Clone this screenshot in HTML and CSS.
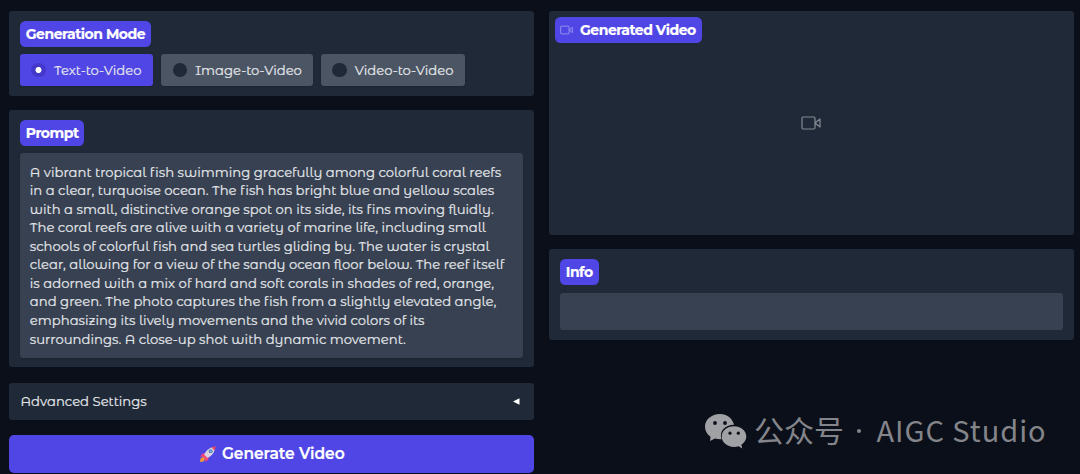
FILE: index.html
```
<!DOCTYPE html>
<html lang="en">
<head>
  <meta charset="UTF-8" />
  <meta name="viewport" content="width=device-width, initial-scale=1" />
  <title>Video Generation</title>
  <link rel="stylesheet" href="styles.css">
</head>
<body>
  <main class="container">
    <div class="column">
      <section class="panel mode-panel">
        <span class="label label-mode">Generation Mode</span>
        <div class="options">
          <div class="option selected"><span class="radio"></span><span class="option-text">Text-to-Video</span></div>
          <div class="option option-image"><span class="radio"></span><span class="option-text">Image-to-Video</span></div>
          <div class="option option-video"><span class="radio"></span><span class="option-text">Video-to-Video</span></div>
        </div>
      </section>

      <section class="panel prompt-panel">
        <span class="label label-prompt">Prompt</span>
        <div class="prompt-text">
          A vibrant tropical fish swimming gracefully among colorful coral reefs<br>
          in a clear, turquoise ocean. The fish has bright blue and yellow scales<br>
          with a small, distinctive orange spot on its side, its fins moving fluidly.<br>
          The coral reefs are alive with a variety of marine life, including small<br>
          schools of colorful fish and sea turtles gliding by. The water is crystal<br>
          clear, allowing for a view of the sandy ocean floor below. The reef itself<br>
          is adorned with a mix of hard and soft corals in shades of red, orange,<br>
          and green. The photo captures the fish from a slightly elevated angle,<br>
          emphasizing its lively movements and the vivid colors of its<br>
          surroundings. A close-up shot with dynamic movement.
        </div>
      </section>

      <section class="panel settings">
        <span>Advanced Settings</span>
        <svg class="arrow" viewBox="0 0 7 7"><path d="M0 3.5 6.5 .3v6.4z" fill="#fff" /></svg>
      </section>

      <button class="generate">
        <svg class="rocket" viewBox="0 0 16 16">
          <path d="M5 7 2 8 0 11l4-1zM9 11l-1 3-3 2 1-4z" fill="#f8457b" />
          <path d="M4 9C6 4 10 1 15 1c0 5-3 9-8 11z" fill="#d9d3e2" />
          <path d="M11.5 1.4 15.8.2 14.7 4.5z" fill="#f0455c" />
          <path d="M4 8.5 7.5 12l-2 1.8-3.3-3.3z" fill="#fa4c77" />
          <path d="M3 11 .5 12.5 0 16l3.5-.5L5 13z" fill="#f99a32" />
          <circle cx="10.7" cy="5.2" r="1.9" fill="#4779b3" />
          <circle cx="10.7" cy="5.2" r="1" fill="#83b9e4" />
        </svg>
        <span>Generate Video</span>
      </button>
    </div>

    <div class="column">
      <section class="panel video-panel">
        <span class="label label-video">
          <svg class="camera-small" viewBox="0 0 20 14"><path d="M2.2 1h10.6q1.2 0 1.2 1.2v9.6q0 1.2-1.2 1.2H2.2Q1 13 1 11.8V2.2Q1 1 2.2 1zM14 7l5-4v8z" /></svg>
          <span>Generated Video</span>
        </span>
        <div class="empty">
          <svg class="camera" viewBox="0 0 20 14"><path d="M2.2 1h10.6q1.2 0 1.2 1.2v9.6q0 1.2-1.2 1.2H2.2Q1 13 1 11.8V2.2Q1 1 2.2 1zM14 7l5-4v8z" /></svg>
        </div>
      </section>

      <section class="panel info-panel">
        <span class="label label-info">Info</span>
        <div class="info-box"></div>
      </section>
    </div>
  </main>

  <div class="watermark">
    <svg class="wechat" viewBox="0 0 42 35">
      <path d="M15 0C6.5 0 0 5.6 0 12.7c0 4 2 7.5 5.5 10L5 27l5-2.5c2 .6 4 .8 6.5.7C14 17 20 11 29 10.8 27.5 4.5 22 0 15 0z" />
      <path d="M29 12.2c-7 0-12.3 4.7-12.3 10.4S22 33 29 33c1.7 0 3.2-.2 4.6-.7l3.6 2.2-.8-3.7c3.100-2 4.900-4.900 4.900-8.200 0-5.700-5.400-10.400-12.300-10.400z" />
      <g class="eyes">
        <circle cx="10" cy="9" r="1.9" /><circle cx="20" cy="9" r="1.9" />
        <circle cx="25" cy="19.2" r="1.6" /><circle cx="33.3" cy="19.2" r="1.6" />
      </g>
    </svg>
    <span class="account">公众号</span>
    <span class="dot"></span>
    <span class="studio">AIGC Studio</span>
  </div>
</body>
</html>
```
FILE: styles.css
```
* {
  box-sizing: border-box;
}

body {
  margin: 0;
  height: 474px;
  background: #0b0f19;
  color: #e5e7eb;
  font-family: 'Montserrat Alternates', Montserrat, 'Inter', sans-serif;
  font-size: 13.2px;
  -webkit-text-stroke: 0.2px;
  overflow: hidden;
  position: relative;
}

.container {
  display: grid;
  grid-template-columns: 525.5px 525.5px;
  gap: 14.5px;
  padding: 11.3px 0 0 8.5px;
}

.column {
  display: flex;
  flex-direction: column;
}

.panel {
  background: #1f2937;
  border-radius: 3px;
  padding: 9.5px 11.3px;
}

.label {
  display: flex;
  align-items: center;
  width: fit-content;
  height: 26.5px;
  padding: 0 6px;
  border-radius: 5.5px;
  background: #4f46e5;
  color: #fff;
  font-family: Montserrat, 'Inter', sans-serif;
  font-size: 14px;
  font-weight: 700;
  letter-spacing: -0.48px;
  white-space: nowrap;
}

.label-mode {
  width: 131.5px;
}

.label-prompt {
  width: 64.5px;
}

.label-info {
  width: 39px;
}

.mode-panel {
  height: 84.5px;
}

.options {
  display: flex;
  gap: 7.7px;
  margin-top: 6.7px;
}

.option {
  display: flex;
  align-items: center;
  gap: 8px;
  width: 133.5px;
  height: 32px;
  padding-left: 11.7px;
  border-radius: 3px;
  background: #4b5563;
  box-shadow: 0 1px 2px rgba(0, 0, 0, 0.1);
  white-space: nowrap;
}

.option-image {
  width: 152px;
}

.option-video {
  width: 144.5px;
}

.option.selected {
  background: #4f46e5;
}

.radio {
  width: 14.5px;
  height: 14.5px;
  border-radius: 50%;
  background: #1f2937;
}

.selected .radio {
  background: radial-gradient(circle, #fff 2.6px, #4338ca 3.4px);
}

.prompt-panel {
  height: 257px;
  margin-top: 14.3px;
}

.prompt-text {
  height: 204.5px;
  margin-top: 7px;
  padding: 9.5px 10px;
  border-radius: 3px;
  background: #374151;
  box-shadow: 0 1px 2px rgba(0, 0, 0, 0.1);
  line-height: 18.55px;
  white-space: nowrap;
}

.settings {
  display: flex;
  align-items: center;
  justify-content: space-between;
  height: 37px;
  margin-top: 16px;
  padding: 0 14px 1px 12px;
}

.arrow {
  width: 7px;
  height: 7px;
}

.generate {
  display: flex;
  align-items: center;
  justify-content: center;
  gap: 6px;
  height: 38px;
  margin-top: 15px;
  padding: 0 0 1px 2px;
  border: none;
  border-radius: 5px;
  background: #4f46e5;
  color: #fff;
  font: 600 15.5px Montserrat, 'Inter', sans-serif;
  letter-spacing: -0.04px;
}

.rocket {
  width: 16px;
  height: 16px;
}

.video-panel {
  display: flex;
  flex-direction: column;
  height: 223.5px;
  padding: 5.7px 6px 0;
}

.label-video {
  width: 147.5px;
  padding: 0 0 1px 5px;
  gap: 7.5px;
}

.camera,
.camera-small {
  fill: none;
  stroke: #838a94;
  stroke-width: 1.2;
  stroke-linejoin: round;
}

.camera {
  width: 20px;
  height: 14px;
}

.camera-small {
  width: 13px;
  height: 10px;
  stroke: #a7a3f2;
}

.empty {
  flex: 1;
  display: flex;
  justify-content: center;
  padding-top: 73px;
}

.info-panel {
  height: 90.5px;
  margin-top: 14.5px;
}

.info-box {
  height: 37.5px;
  margin-top: 7.7px;
  border-radius: 3px;
  background: #374151;
}

.watermark {
  position: absolute;
  left: 705px;
  top: 413px;
  display: flex;
  align-items: center;
  height: 36px;
  color: #83858a;
  font-family: 'Noto Sans CJK SC', sans-serif;
  font-size: 30px;
  line-height: 32px;
  -webkit-text-stroke: 0;
  white-space: nowrap;
}

.wechat {
  width: 42px;
  height: 35px;
  fill: #a0a1a4;
}

.eyes {
  fill: #0b0f19;
}

.account,
.studio {
  padding-bottom: 5px;
}

.account {
  margin-left: 7px;
}

.dot {
  width: 4px;
  height: 4px;
  margin-left: 13px;
  border-radius: 50%;
  background: #83858a;
}

.studio {
  margin-left: 15.5px;
  font-size: 29px;
  letter-spacing: 0.95px;
}
```
